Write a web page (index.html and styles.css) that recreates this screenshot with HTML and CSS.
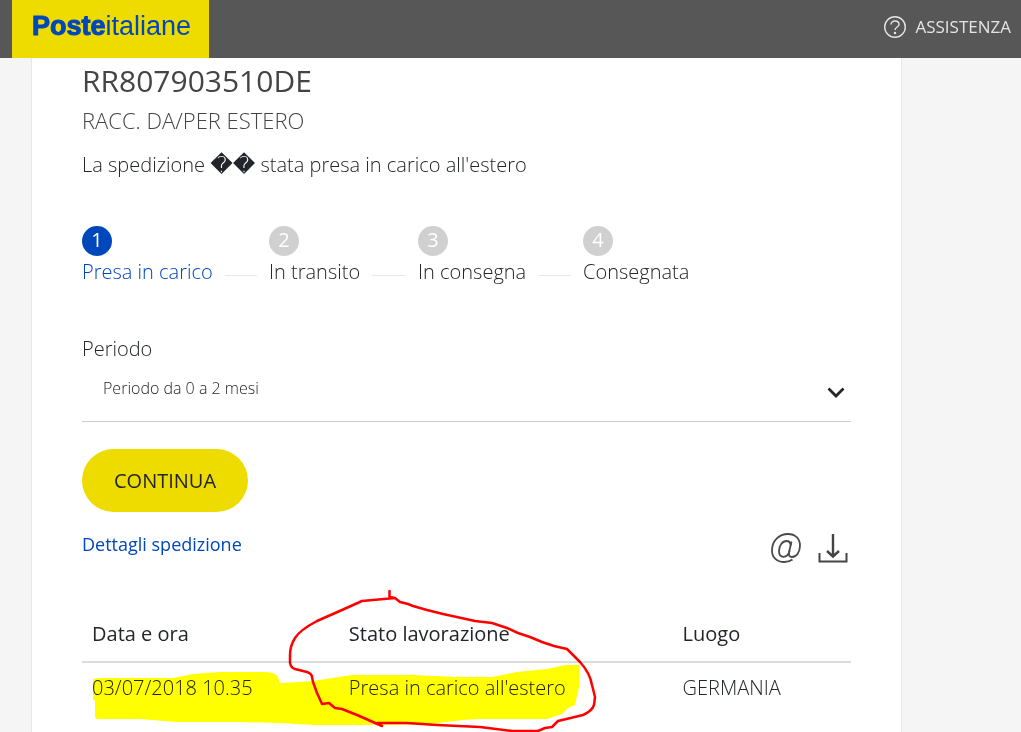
FILE: index.html
```
<!DOCTYPE html>
<html lang="it">
<head>
    <meta charset="UTF-8">
    <meta name="viewport" content="width=device-width, initial-scale=1">
    <title>Poste Italiane</title>
    <link rel="stylesheet" href="styles.css">
</head>
<body>
    <header class="topbar">
        <a class="logo" href="#"><b>Poste</b>italiane</a>
        <a class="help" href="#">
            <svg width="24" height="24" viewBox="0 0 24 24" fill="none" stroke="currentColor" stroke-width="1.4">
                <circle cx="12" cy="12" r="10.3"/>
                <path d="M8 9.6C8 7.4 9.700 6 12 6s4 1.400 4 3.400c0 2.600-4 2.600-4 5.600"/>
                <circle cx="12" cy="18" r="0.6" fill="currentColor"/>
            </svg>
            <span>ASSISTENZA</span>
        </a>
    </header>

    <main class="card">
        <h1 class="code">RR807903510DE</h1>
        <p class="product">RACC. DA/PER ESTERO</p>
        <p class="message">La spedizione <span class="unknown">��</span> stata presa in carico all'estero</p>

        <ol class="steps">
            <li class="step active"><span class="num">1</span><span class="label">Presa in carico</span></li>
            <li class="step"><span class="num">2</span><span class="label">In transito</span></li>
            <li class="step"><span class="num">3</span><span class="label">In consegna</span></li>
            <li class="step"><span class="num">4</span><span class="label">Consegnata</span></li>
        </ol>

        <form class="period">
            <label for="periodo">Periodo</label>
            <div class="select-row">
                <select id="periodo">
                    <option>Periodo da 0 a 2 mesi</option>
                </select>
                <svg class="chevron" width="18" height="12" viewBox="0 0 18 12" fill="none" stroke="#222529" stroke-width="2.8">
                    <path d="M1.500 1.500 9 9l7.500-7.500"/>
                </svg>
            </div>
            <button type="button" class="continue">CONTINUA</button>
        </form>

        <div class="details-bar">
            <a class="details" href="#">Dettagli spedizione</a>
            <div class="tools">
                <button type="button" class="tool" aria-label="Invia per email">
                    <svg width="30" height="30" viewBox="0 0 30 30" fill="none" stroke="#4a4a4a" stroke-width="1.8">
                        <path d="M21.500 26.500C19.500 28 16.500 29 13.200 29 6 29 1 24.500 1 17.500 1 8 8 1 17 1c7 0 12 4.500 12 11.500 0 6.500-3.500 11.500-8 11.500-2.800 0-3.400-1.900-3-4.500L20.500 8.500"/>
                        <path d="M19.700 12.500C19.500 9.500 18 8 15.500 8 11.500 8 8 12.500 8 18c0 3.500 1.700 5.800 4.500 5.800 3.200 0 5.200-2.300 6-6"/>
                    </svg>
                </button>
                <button type="button" class="tool" aria-label="Scarica">
                    <svg width="30" height="30" viewBox="0 0 30 30" fill="none" stroke="#444" stroke-width="2">
                        <path stroke-width="2.4" d="M15 1v22M9 18l6 5.500 6-5.500"/>
                        <path d="M1.500 20v8.500h27V20"/>
                    </svg>
                </button>
            </div>
        </div>

        <div class="tracking">
            <table>
                <thead>
                    <tr>
                        <th class="col-date">Data e ora</th>
                        <th class="col-state">Stato lavorazione</th>
                        <th class="col-place">Luogo</th>
                    </tr>
                </thead>
                <tbody>
                    <tr>
                        <td>03/07/2018 10.35</td>
                        <td>Presa in carico all'estero</td>
                        <td>GERMANIA</td>
                    </tr>
                </tbody>
            </table>
            <!-- marker pen and red circle over the first row -->
            <svg class="marks" width="520" height="145" viewBox="82 587 520 145">
                <path fill="#ff0" d="M93 679 100 678H173L193 674 220 672H263Q275 672 278 677L280 683 298 682 313 681 352 675H413L457 677H492L517 672 547 669 565 665H579V687L575 705 568 708 562 714 547 719H480L463 720 430 724 387 725H313L280 723 240 722H177L140 719H98Q95 719 95 716V700H93z"/>
                <path fill="none" stroke="#f00" stroke-width="2.5" stroke-linejoin="round" stroke-linecap="round" d="M389.500 591V597L395 598 400 602 408 604 413 606 427 610 443 614 475 621 492 623 507 628 518 633 530 637 542 642 554 646 567 649 580 662Q590 673 592 685L595 697 594 705Q592 711 583 715L558 721 552 727 545 728 538 731H513L480 727 437 725 407 723H378M395 598 362 601 342 610 317 621Q300 630 295 638 290 646 290 655V663Q291 668 295 669L307 672Q312 674 312 677L313 682 317 693 322 704 329 703 335 708 342 709 357 715 382 726"/>
            </svg>
        </div>
    </main>
</body>
</html>
```

FILE: styles.css
```
* {
    box-sizing: border-box;
}

body {
    margin: 0;
    min-height: 100vh;
    display: flex;
    flex-direction: column;
    background: #f5f5f5;
    color: #222529;
    font-family: "Open Sans", "Liberation Sans", sans-serif;
    font-size: 20px;
    font-weight: 300;
    line-height: 28px;
}

a {
    text-decoration: none;
}

button {
    font: inherit;
    color: inherit;
    border: 0;
    background: none;
    cursor: pointer;
}

.topbar {
    display: flex;
    justify-content: space-between;
    height: 58px;
    padding: 0 10px 0 12px;
    background: #575757;
}

.logo {
    padding: 10px 18px 0 20px;
    background: #eedc00;
    color: #0047bb;
    font-family: "Liberation Sans", Arial, sans-serif;
    font-size: 27px;
    font-weight: 400;
    line-height: 32px;
}

.logo b {
    -webkit-text-stroke: 1px #0047bb;
}

.help {
    display: flex;
    align-items: center;
    gap: 8px;
    padding-bottom: 4px;
    color: #e4e4e4;
    font-size: 17px;
    font-weight: 400;
}

.card {
    flex: 1;
    margin: 0 119px 0 31px;
    padding: 6px 50px 0;
    border: solid #e8e8e8;
    border-width: 0 1px;
    background: #fff;
}

.code {
    margin: 0;
    color: #444;
    font-size: 30px;
    font-weight: 400;
    line-height: 34px;
}

.product {
    margin: 8px 0 0;
    color: #444;
    font-size: 22px;
}

.message {
    margin: 17px 0 0;
}

.unknown {
    font-family: "DejaVu Sans", sans-serif;
    font-size: 22px;
    line-height: 20px;
}

.steps {
    display: grid;
    grid-template-columns: 187px 149px 165px auto;
    margin: 47px 0 0;
    padding: 0;
    list-style: none;
}

.step {
    display: grid;
    grid-template-columns: auto 1fr;
    align-items: center;
    gap: 2px 12px;
    padding-right: 12px;
}

.step:not(:last-child)::after {
    content: "";
    height: 1px;
    margin-top: 6px;
    background: #e8e8e8;
}

.num {
    grid-column: 1 / -1;
    width: 30px;
    height: 30px;
    border-radius: 50%;
    background: #d0d0d0;
    color: #fff;
    font-weight: 400;
    text-align: center;
}

.active .num {
    background: #0047bb;
}

.active .label {
    color: #0047bb;
}

.period {
    margin-top: 49px;
}

.period label {
    display: block;
}

.select-row {
    position: relative;
    height: 59px;
    border-bottom: 1px solid #ccc;
}

.select-row select {
    display: block;
    width: 100%;
    height: 50px;
    padding: 0 40px 0 21px;
    border: 0;
    appearance: none;
    background: none;
    color: inherit;
    font: inherit;
    font-size: 16px;
}

.chevron {
    position: absolute;
    right: 6px;
    top: 24px;
    pointer-events: none;
}

.continue {
    height: 63px;
    margin-top: 27px;
    padding: 0 32px;
    border-radius: 32px;
    background: #eedc00;
    font-weight: 400;
}

.details-bar {
    display: flex;
    justify-content: space-between;
    margin-top: 18px;
}

.details {
    color: #0047bb;
    font-size: 18px;
    font-weight: 400;
}

.tools {
    display: flex;
    gap: 17px;
    padding: 3px 3px 0 0;
}

.tool {
    height: 30px;
    padding: 0;
}

.tool svg {
    display: block;
}

.tracking {
    position: relative;
    margin-top: 24px;
}

table {
    width: 100%;
    table-layout: fixed;
    border-collapse: collapse;
    text-align: left;
}

th {
    height: 75px;
    padding: 20px 10px 0;
    border-bottom: 2px solid #ddd;
    font-weight: 400;
}

td {
    height: 50px;
    padding: 0 10px;
}

.col-date {
    width: 33.4%;
}

.col-state {
    width: 43.4%;
}

.marks {
    position: absolute;
    left: 0;
    top: 0;
    mix-blend-mode: multiply;
    pointer-events: none;
}
```
